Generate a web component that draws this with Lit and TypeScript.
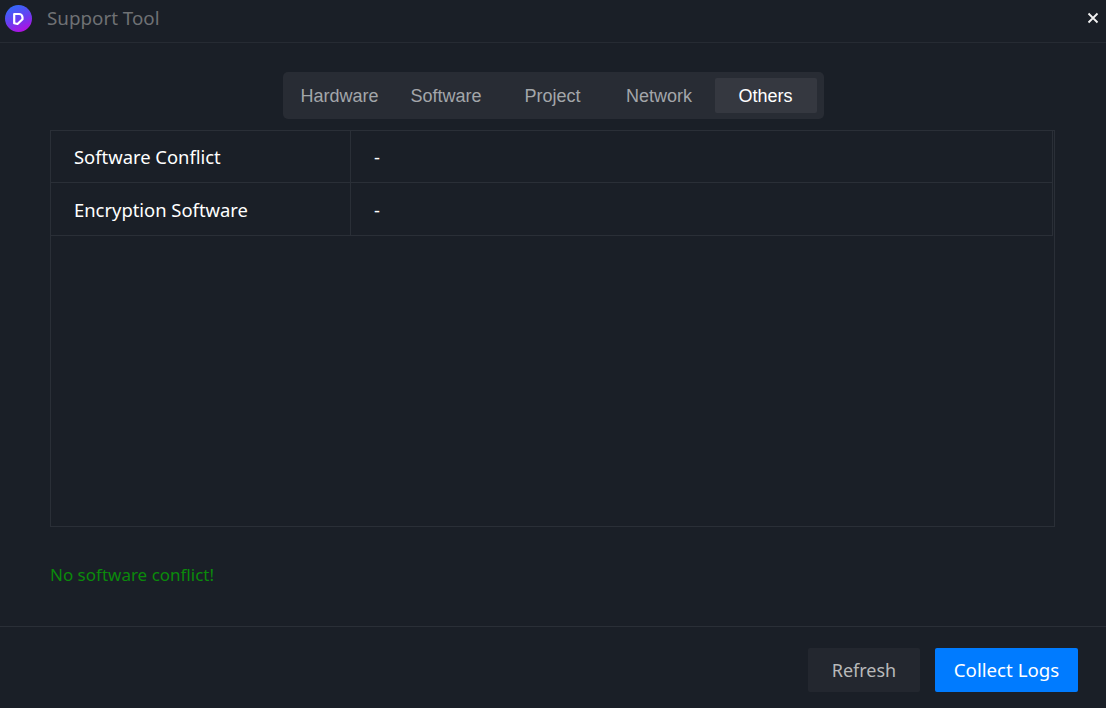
import { LitElement, html, css } from "lit";
import { customElement } from "lit/decorators.js";

@customElement("app-root")
export class AppRoot extends LitElement {
  static styles = css`
    :host {
      display: flex;
      flex-direction: column;
      width: 1106px;
      height: 708px;
      background: #1a1f27;
      font-family: "Noto Sans", "Open Sans", sans-serif;
      overflow: hidden;
    }
    .title {
      height: 42px;
      flex: none;
      box-sizing: content-box;
      border-bottom: 1px solid #262b33;
      display: flex;
      align-items: center;
      padding: 0 7px 0 5px;
    }
    .logo { width: 27px; height: 27px; margin-top: -6px; flex: none; }
    .name {
      margin-left: 15px;
      margin-top: -6px;
      font-size: 18.8px;
      color: #6f7174;
      flex: 1;
    }
    .close { width: 12px; height: 12px; margin-top: -6px; flex: none; }
    .main {
      flex: 1;
      display: flex;
      flex-direction: column;
      padding: 29px 51px 0 50px;
      min-height: 0;
    }
    .tabs {
      align-self: center;
      width: 528px;
      padding: 6px 7px 6px 6px;
      height: 35px;
      margin-left: 1px;
      display: grid;
      grid-template-columns: repeat(5, 102px);
      justify-content: space-between;
      background: #282c34;
      border-radius: 5px;
    }
    .tab {
      display: flex;
      align-items: center;
      justify-content: center;
      padding-top: 1px;
      font-family: "Liberation Sans", Arial, sans-serif;
      font-size: 18px;
      color: #a3a6aa;
      border-radius: 2px;
    }
    .tab.on { background: #353840; color: #ffffff; }
    .table {
      margin-top: 11px;
      height: 397px;
      box-sizing: border-box;
      border: 1px solid #2a2f37;
      padding-right: 1px;
      flex: none;
    }
    .row {
      display: grid;
      grid-template-columns: 299px 1fr;
      height: 52px;
      box-sizing: border-box;
      border-bottom: 1px solid #2a2f37;
      border-right: 1px solid #2a2f37;
      color: #ffffff;
      font-size: 18.4px;
    }
    .row + .row { height: 53px; }
    .cell { display: flex; align-items: center; padding-left: 23px; }
    .cell + .cell { border-left: 1px solid #2a2f37; }
    .status {
      margin-top: 35px;
      font-size: 17px;
      line-height: 26px;
      color: #0b8a0b;
    }
    .footer {
      flex: none;
      height: 82px;
      border-top: 1px solid #2a2f37;
      display: flex;
      justify-content: flex-end;
      gap: 15px;
      padding: 21px 28px 0 0;
      box-sizing: border-box;
    }
    .btn {
      height: 44px;
      display: flex;
      align-items: center;
      justify-content: center;
      border-radius: 2px;
      font-family: inherit;
      border: 0;
      padding: 0;
    }
    .refresh { width: 112px; background: #23272f; color: #b8b9ba; font-size: 18px; }
    .collect { width: 143px; background: #007bff; color: #ffffff; font-size: 18.7px; padding-bottom: 2px; }
  `;

  render() {
    const tabs = ["Hardware", "Software", "Project", "Network", "Others"];
    return html`
      <div class="title">
        <svg class="logo" viewBox="0 0 27 27">
          <defs>
            <linearGradient id="g" x1="0.25" y1="0" x2="0.65" y2="1">
              <stop offset="0" stop-color="#2f6dfb" />
              <stop offset="0.55" stop-color="#6a3cf0" />
              <stop offset="1" stop-color="#b40fe0" />
            </linearGradient>
          </defs>
          <circle cx="13.5" cy="13.5" r="13.5" fill="url(#g)" />
          <path
            d="M9.2 9h4.800a3.500 3.500 0 0 1 3.500 3.500v1.800l-5 4.700-3.300-.8z"
            fill="none"
            stroke="#fff"
            stroke-width="2.200"
            stroke-linejoin="round"
          />
        </svg>
        <div class="name">Support Tool</div>
        <svg class="close" viewBox="0 0 12 12">
          <path d="M1.500 1.500l9 9M10.500 1.500l-9 9" stroke="#f2f2f2" stroke-width="1.800" fill="none" />
        </svg>
      </div>
      <div class="main">
        <div class="tabs">
          ${tabs.map((t) => html`<div class="tab ${t === "Others" ? "on" : ""}">${t}</div>`)}
        </div>
        <div class="table">
          <div class="row"><div class="cell">Software Conflict</div><div class="cell">-</div></div>
          <div class="row"><div class="cell">Encryption Software</div><div class="cell">-</div></div>
        </div>
        <div class="status">No software conflict!</div>
      </div>
      <div class="footer">
        <button class="btn refresh">Refresh</button>
        <button class="btn collect">Collect Logs</button>
      </div>
    `;
  }
}
